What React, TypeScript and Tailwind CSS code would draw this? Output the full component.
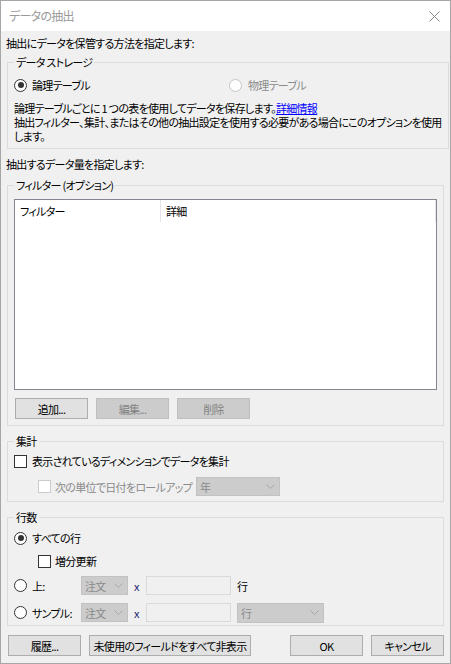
import React from 'react';

// small win32-style controls
const Radio = ({ checked, disabled }: { checked?: boolean; disabled?: boolean }) => (
  <span
    className={`w-[13px] h-[13px] shrink-0 rounded-full border bg-white flex items-center justify-center ${
      disabled ? 'border-[#c4c4c4]' : 'border-[#333333]'
    }`}
  >
    {checked && <span className="w-[6px] h-[6px] rounded-full bg-[#333333]" />}
  </span>
);

const Check = ({ disabled }: { disabled?: boolean }) => (
  <span
    className={`w-[13px] h-[13px] shrink-0 border bg-white ${disabled ? 'border-[#cccccc]' : 'border-[#333333]'}`}
  />
);

const Btn = ({ label, w, disabled }: { label: string; w: string; disabled?: boolean }) => (
  <button
    className={`${w} h-[21px] shrink-0 border whitespace-nowrap ${
      disabled ? 'bg-[#cccccc] border-[#bfbfbf] text-[#838383]' : 'bg-[#e1e1e1] border-[#adadad] text-black'
    }`}
  >
    {label}
  </button>
);

const Chevron = () => (
  <svg width="9" height="5" viewBox="0 0 9 5" className="shrink-0">
    <polyline points="0.5,0.5 4.5,4.5 8.5,0.5" fill="none" stroke="#a8a8a8" strokeWidth="1" />
  </svg>
);

const Select = ({ label, w, h }: { label: string; w: string; h: string }) => (
  <div
    className={`${w} ${h} shrink-0 bg-[#cccccc] border border-[#c2c2c2] flex items-center justify-between pl-[3px] pr-[4px] text-[#8a8a8a]`}
  >
    <span>{label}</span>
    <Chevron />
  </div>
);

const Group = ({ title, className, children }: { title: string; className: string; children: React.ReactNode }) => (
  <fieldset className={`ml-[1px] w-[437px] shrink-0 border border-[#dcdcdc] px-[6px] ${className}`}>
    <legend className="px-[2px] leading-[14px]">{title}</legend>
    {children}
  </fieldset>
);

export default function App() {
  return (
    <div className="w-[451px] h-[664px] overflow-hidden border border-[#a6a6a6] bg-[#f0f0f0] flex flex-col font-['Noto_Sans_CJK_JP',sans-serif] [font-feature-settings:'palt'] text-[11px] tracking-[-0.7px] leading-[14px] text-black">
      {/* title bar */}
      <div className="h-[30px] shrink-0 bg-white flex items-center justify-between pl-[8px] pr-[10px]">
        <span className="text-[12px] text-[#9a9a9a]">データの抽出</span>
        <svg width="11" height="11" viewBox="0 0 11 11">
          <path d="M0.5 0.5 L10.5 10.5 M10.5 0.5 L0.5 10.5" stroke="#8a8a8a" strokeWidth="1" />
        </svg>
      </div>

      <div className="flex flex-col pl-[5px] pt-[5px]">
        <p>抽出にデータを保管する方法を指定します:</p>

        <Group title="データ ストレージ" className="mt-[5px] pt-[9px] pb-[5px]">
          <div className="flex items-center h-[14px]">
            <div className="flex items-center gap-[5px] w-[215px]">
              <Radio checked />
              <span>論理テーブル</span>
            </div>
            <div className="flex items-center gap-[6px] text-[#8a8a8a]">
              <Radio disabled />
              <span>物理テーブル</span>
            </div>
          </div>
          <p className="mt-[9px] whitespace-nowrap">
            論理テーブルごとに 1 つの表を使用してデータを保存します。
            <span className="text-[#0000ff] underline">詳細情報</span>
            <br />
            抽出フィルター、集計、またはその他の抽出設定を使用する必要がある場合にこのオプションを使用
            <br />
            します。
          </p>
        </Group>

        <p className="mt-[8px]">抽出するデータ量を指定します:</p>

        <Group title="フィルター (オプション)" className="mt-[7px] pt-[7px] pb-[6px]">
          <div className="h-[191px] bg-white border border-[#828790]">
            <div className="flex h-[22px]">
              <div className="w-[146px] border-r border-[#e5e5e5] pl-[5px] flex items-center">フィルター</div>
              <div className="flex-1 border-r border-[#e5e5e5] pl-[5px] flex items-center">詳細</div>
            </div>
          </div>
          <div className="mt-[8px] flex gap-[8px] pl-[1px]">
            <Btn label="追加..." w="w-[73px]" />
            <Btn label="編集..." w="w-[73px]" disabled />
            <Btn label="削除" w="w-[73px]" disabled />
          </div>
        </Group>

        <Group title="集計" className="mt-[8px] pt-[6px] pb-[5px]">
          <div className="flex items-center gap-[5px] h-[14px]">
            <Check />
            <span>表示されているディメンションでデータを集計</span>
          </div>
          <div className="mt-[9px] flex items-center pl-[24px] h-[19px]">
            <Check disabled />
            <span className="ml-[4px] w-[141px] whitespace-nowrap text-[#8a8a8a]">次の単位で日付をロールアップ</span>
            <Select label="年" w="w-[84px]" h="h-[19px]" />
          </div>
        </Group>

        <Group title="行数" className="mt-[8px] pt-[7px] pb-[3px]">
          <div className="flex items-center gap-[5px] h-[14px]">
            <Radio checked />
            <span>すべての行</span>
          </div>
          <div className="mt-[9px] flex items-center gap-[4px] pl-[24px] h-[14px]">
            <Check />
            <span>増分更新</span>
          </div>
          <div className="mt-[8px] flex items-center h-[19px]">
            <Radio />
            <span className="ml-[5px] w-[49px]">上:</span>
            <Select label="注文" w="w-[47px]" h="h-[19px]" />
            <span className="ml-[6px] w-[12px] text-[#1a1a6e]">x</span>
            <div className="w-[85px] h-[19px] shrink-0 bg-[#f0f0f0] border border-[#dadada]" />
            <span className="ml-[6px]">行</span>
          </div>
          <div className="mt-[8px] flex items-center h-[19px]">
            <Radio />
            <span className="ml-[5px] w-[49px] whitespace-nowrap">サンプル:</span>
            <Select label="注文" w="w-[47px]" h="h-[19px]" />
            <span className="ml-[6px] w-[12px] text-[#1a1a6e]">x</span>
            <div className="w-[85px] h-[19px] shrink-0 bg-[#f0f0f0] border border-[#dadada]" />
            <div className="ml-[6px]">
              <Select label="行" w="w-[87px]" h="h-[20px]" />
            </div>
          </div>
        </Group>

        <div className="mt-[9px] flex items-center pl-[2px] pr-[6px]">
          <Btn label="履歴..." w="w-[73px]" />
          <div className="ml-[8px]">
            <Btn label="未使用のフィールドをすべて非表示" w="w-[162px]" />
          </div>
          <div className="ml-auto flex gap-[8px]">
            <Btn label="OK" w="w-[73px]" />
            <Btn label="キャンセル" w="w-[73px]" />
          </div>
        </div>
      </div>
    </div>
  );
}
